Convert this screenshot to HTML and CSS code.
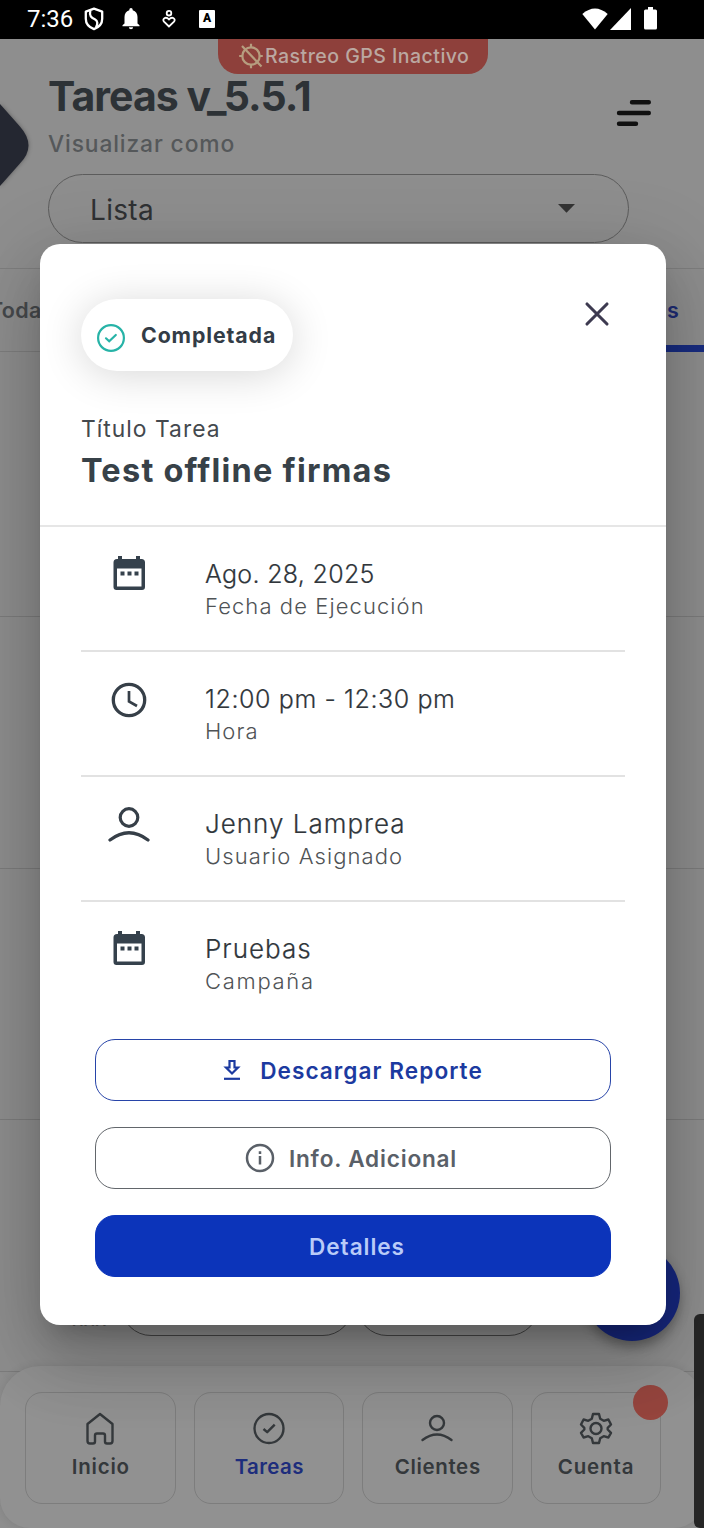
FILE: index.html
```html
<!DOCTYPE html>
<html lang="es">
<head>
<meta charset="utf-8">
<title>Tareas</title>
<link rel="stylesheet" href="styles.css">
</head>
<body>
<div class="screen">
  <div class="statusbar">
    <span class="clock">7:36</span>
    <svg class="sb-shield" width="20" height="24" viewBox="0 0 20 24" fill="none" stroke="#fff" stroke-width="2.3" stroke-linejoin="round"><path d="M10 1.6 18.2 4.6v7.2c0 4.8-3.4 8.6-8.2 10.4C5.200 20.400 1.800 16.600 1.800 11.800V4.600Z"/><path d="M6.300 3.500c-1.200 5.500 1 7 4.500 8.800 3 1.700 3.200 4.500 1.200 8"/></svg>
    <svg class="sb-bell" width="18" height="22" viewBox="0 0 18 22" fill="#fff"><path d="M9 0a1.700 1.700 0 0 1 1.700 1.700v.6c3.200.8 4.800 3.500 4.800 6.700v6.500l2 1.800v1H.5v-1l2-1.800V9c0-3.200 1.600-5.900 4.800-6.700v-.6A1.700 1.700 0 0 1 9 0Z"/><path d="M6.900 19.200h4.200a2.100 2 0 0 1-4.200 0Z"/></svg>
    <svg class="sb-care" width="14" height="18" viewBox="0 0 14 18" fill="none" stroke="#fff" stroke-width="1.800"><circle cx="7" cy="3.200" r="2.300"/><path d="M7 16.500 2 11.700C-.3 9 3.700 5.800 7 9.500 10.300 5.800 14.300 9 12 11.700Z"/></svg>
    <span class="sb-a">A</span>
    <svg class="sb-wifi" width="26" height="22" viewBox="0 0 26 22" fill="#fff"><path d="M13 21.500.3 6Q13-5 25.700 6Z"/></svg>
    <svg class="sb-signal" width="21" height="22" viewBox="0 0 21 22" fill="#fff"><path d="M21 0v22H0Z"/></svg>
    <svg class="sb-battery" width="13" height="23" viewBox="0 0 13 23" fill="#fff"><path d="M4 0h5v2.500h2.500q1.500 0 1.500 1.500v17q0 1.500-1.500 1.500h-10Q0 22.500 0 21V4q0-1.500 1.500-1.500H4Z"/></svg>
  </div>

  <div class="app">
    <header class="header">
      <div class="header-text">
        <h1 class="title">Tareas v_5.5.1</h1>
        <p class="subtitle">Visualizar como</p>
      </div>
      <svg class="menu" width="36" height="28" viewBox="0 0 36 28" stroke="#111" stroke-width="4.400" stroke-linecap="round"><path d="M16 3.200H32.800M3 14H32.800M3 24.700H20"/></svg>
      <div class="select"><span>Lista</span><svg width="17" height="9" viewBox="0 0 17 9" fill="#333"><path d="M0 0h17L8.500 8.700Z"/></svg></div>
    </header>
    <div class="tabs"><span class="tab tab-first">Todas</span><span class="tab tab-active">s</span></div>
    <div class="list">
      <div class="row"></div><div class="row"></div><div class="row"></div>
      <div class="row row-last"><span class="row-label">xxx</span><i class="pill pill-a"></i><i class="pill pill-b"></i></div>
    </div>
    <div class="gps"><svg width="24" height="26" viewBox="0 0 24 26" fill="none" stroke="#b69d7f" stroke-width="2.200"><circle cx="12" cy="13" r="8.700"/><path d="M12 .7v4M12 21.300v4M.2 13h4M19.800 13h4M3 3 22.500 23.500"/></svg><span>Rastreo GPS Inactivo</span></div>
    <svg class="drawer" width="30" height="90" viewBox="0 0 30 90"><path d="M0 3 19.500 25Q37.500 45 19.500 63L0 85Z" fill="#242731"/></svg>
    <div class="fab"></div>
    <nav class="nav">
      <div class="nav-item"><svg width="34" height="34" viewBox="0 0 34 34" class="line"><path d="M4.500 12 17 2 29.500 12V29Q29.500 31.500 27 31.500H24Q22 31.500 22 29.500V23.500Q22 21.500 20 21.500H14Q12 21.500 12 23.500V29.500Q12 31.500 10 31.500H7Q4.500 31.500 4.500 29Z"/></svg><span class="l-inicio">Inicio</span></div>
      <div class="nav-item active"><svg width="34" height="34" viewBox="0 0 34 34" class="line"><circle cx="17" cy="16.500" r="14.500"/><path d="m11.500 17 3.700 3.200 7.500-7.500"/></svg><span class="l-tareas">Tareas</span></div>
      <div class="nav-item"><svg width="34" height="34" viewBox="0 0 34 34" class="line"><circle cx="17" cy="11" r="7"/><path d="M2.500 28Q17 17 31.500 28" stroke-linecap="round"/></svg><span class="l-clientes">Clientes</span></div>
      <div class="nav-item nav-narrow"><svg width="34" height="34" viewBox="0 0 34 34" class="line"><path d="M14 2H20L21.200 6.800 24.700 8.800 29.400 7.500 32 12.500 28.700 15.800V17.500L32 20.800 29.400 25.500 24.700 24.200 21.200 26.200 20 31H14L12.800 26.200 9.300 24.200 4.600 25.500 2 20.800 5.300 17.500V15.800L2 12.500 4.600 7.500 9.300 8.800 12.800 6.800Z"/><circle cx="17" cy="16.500" r="5.500"/></svg><span class="l-cuenta">Cuenta</span><i class="dot"></i></div>
    </nav>
    <div class="edge"></div>
  </div>

  <section class="modal">
    <div class="modal-head">
      <div class="modal-top">
        <div class="chip"><svg width="28" height="28" viewBox="0 0 28 28" fill="none" stroke="#27b3a7" stroke-width="2.200" stroke-linecap="round"><circle cx="14" cy="14" r="12.900"/><path d="m9 14.300 3.200 3 6.600-6.300"/></svg><span>Completada</span></div>
        <svg class="close" width="26" height="26" viewBox="0 0 26 26" stroke="#3d3a50" stroke-width="3.100" stroke-linecap="round"><path d="M3 3 23 23M23 3 3 23"/></svg>
      </div>
      <p class="kicker">Título Tarea</p>
      <h2 class="task">Test offline firmas</h2>
    </div>
    <div class="details">
      <div class="detail">
        <svg class="ico" width="42" height="42" viewBox="0 0 42 42" fill="#35414c"><path fill-rule="evenodd" d="M10 3h4v3h14V3h4v3h1.500Q37 6 37 9.500V34q0 3-3 3H8.500q-3 0-3-3V9.500Q5.500 6 9 6h1ZM9 15.500V33.500H33.500V15.500Z"/><path d="M12.500 18.500h4v4h-4ZM19.500 18.500h4v4h-4ZM26.500 18.500h4v4h-4Z"/></svg>
        <div><p class="main m-date">Ago. 28, 2025</p><p class="sub">Fecha de Ejecución</p></div>
      </div>
      <div class="detail">
        <svg class="ico" width="42" height="42" viewBox="0 0 42 42" fill="none" stroke="#363f48" stroke-width="3.300"><circle cx="21" cy="22" r="15.700"/><path d="M21 13v10.500l8 4.500" stroke-width="2.700"/></svg>
        <div><p class="main m-time">12:00 pm - 12:30 pm</p><p class="sub">Hora</p></div>
      </div>
      <div class="detail">
        <svg class="ico" width="42" height="42" viewBox="0 0 42 42" fill="none" stroke="#363f48" stroke-width="3.200"><circle cx="21" cy="14.500" r="8.800"/><path d="M2 37Q21 22.500 40 37" stroke-linecap="round"/></svg>
        <div><p class="main">Jenny Lamprea</p><p class="sub">Usuario Asignado</p></div>
      </div>
      <div class="detail">
        <svg class="ico" width="42" height="42" viewBox="0 0 42 42" fill="#35414c"><path fill-rule="evenodd" d="M10 3h4v3h14V3h4v3h1.500Q37 6 37 9.500V34q0 3-3 3H8.500q-3 0-3-3V9.500Q5.500 6 9 6h1ZM9 15.500V33.500H33.500V15.500Z"/><path d="M12.500 18.500h4v4h-4ZM19.500 18.500h4v4h-4ZM26.500 18.500h4v4h-4Z"/></svg>
        <div><p class="main">Pruebas</p><p class="sub s-camp">Campaña</p></div>
      </div>
    </div>
    <div class="actions">
      <div class="btn btn-report"><svg width="18" height="22" viewBox="0 0 18 22" fill="none" stroke="#1c3aa0" stroke-width="2.200"><path d="M6.500 2h5v6.500H15L9 14.500 3 8.500H6.500Z"/><path d="M1 19.800H17"/></svg><span>Descargar Reporte</span></div>
      <div class="btn btn-info"><svg width="30" height="30" viewBox="0 0 30 30" fill="none" stroke="#5a6068" stroke-width="2.500"><circle cx="15" cy="15" r="13"/><path d="M15 13V21.500M15 8.300v2.800"/></svg><span>Info. Adicional</span></div>
      <div class="btn btn-main"><span>Detalles</span></div>
    </div>
  </section>
</div>
</body>
</html>
```
FILE: styles.css
```css
* { box-sizing: border-box; }
body { margin: 0; font-family: Inter, "Open Sans", sans-serif; }
h1, h2, p { margin: 0; white-space: nowrap; }
svg { display: block; flex: none; }
.screen { position: relative; width: 704px; height: 1528px; overflow: hidden; display: flex; flex-direction: column; background: #8e8e8e; }

/* status bar */
.statusbar { height: 39px; flex: none; background: #000; display: flex; align-items: center; padding: 0 0 2px 27px; color: #fff; }
.clock { font: 400 24px/36px Roboto, sans-serif; width: 57px; white-space: nowrap; }
.sb-bell { margin-left: 18px; }
.sb-care { margin-left: 22px; }
.sb-a { margin-left: 23px; width: 16px; height: 18px; background: #fff; color: #000; border-radius: 1px; font: 900 12px/16px Roboto, sans-serif; text-align: center; }
.sb-wifi { margin-left: 367px; }
.sb-signal { margin-left: 2px; }
.sb-battery { margin-left: 13px; }

/* dimmed app */
.app { position: relative; flex: 1; display: flex; flex-direction: column; overflow: hidden; }
.header { height: 230px; padding: 34px 52px 0 48px; display: flex; flex-wrap: wrap; justify-content: space-between; align-content: flex-start; border-bottom: 1px solid #7e7e7e; }
.title { font-size: 41px; line-height: 46px; font-weight: 700; letter-spacing: -.940px; color: #2d3236; }
.subtitle { margin-top: 13px; font-size: 22.800px; line-height: 24px; font-weight: 500; letter-spacing: .880px; color: #55585a; }
.menu { margin-top: 26px; }
.select { width: 581px; height: 69px; margin-top: 18px; padding: 2px 53px 0 41px; border: 1.500px solid #5c5c5c; border-radius: 35px; display: flex; align-items: center; justify-content: space-between; font-size: 28px; letter-spacing: .300px; color: #2f3133; }
.select svg { margin-top: -2px; }
.tabs { height: 83px; flex: none; display: flex; align-items: center; justify-content: space-between; border-bottom: 1px solid #7e7e7e; font-size: 21.500px; font-weight: 600; }
.tab { line-height: 83px; height: 83px; }
.tab-first { margin-left: -11px; color: #46494c; letter-spacing: .3px; }
.tab-active { width: 80px; padding-left: 43px; color: #1e2c74; border-bottom: 7px solid #182c80; }
.list { flex: 1; }
.row { height: 251.500px; border-bottom: 1px solid #7c7c7c; }
.row:first-child { height: 265px; }
.row-last { display: flex; align-items: flex-end; padding: 0 0 35px 72px; }
.row-label { width: 49px; font-size: 21px; line-height: 20px; margin-bottom: 7px; color: #555; }
.pill { height: 60px; border: 1.500px solid #454545; border-radius: 30px; }
.pill-a { width: 232px; }
.pill-b { width: 182px; margin-left: 4px; }

.gps { position: absolute; top: 0; left: 218px; width: 270px; height: 35px; border-radius: 0 0 20px 20px; background: #8e403b; display: flex; align-items: center; padding: 0 0 2px 21px; color: #bba8a1; font-size: 19.500px; font-weight: 500; letter-spacing: .480px; white-space: nowrap; }
.gps span { margin-left: 2px; }
.drawer { position: absolute; left: 0; top: 62px; filter: drop-shadow(0 0 2px rgba(0, 0, 0, .35)); }
.fab { position: absolute; left: 584px; top: 1206px; width: 96px; height: 96px; border-radius: 50%; background: #17287f; box-shadow: 0 6px 12px rgba(0, 0, 0, .3); }
.nav { position: absolute; left: 0; bottom: 0; width: 704px; height: 162px; padding: 26px 0 24px 25px; display: flex; gap: 18px; background: #919191; border-radius: 40px 40px 30px 30px; box-shadow: 0 0 8px rgba(0, 0, 0, .1); }
.nav-item { position: relative; width: 150.500px; height: 112px; padding-top: 19px; border: 1px solid #7d7d7d; border-radius: 17px; display: flex; flex-direction: column; align-items: center; color: #34383b; font-size: 20.500px; line-height: 24px; font-weight: 600; }
.nav-narrow { width: 130px; }
.nav-item span { margin: 9px 0 0 1px; }
.nav-item.active span { color: #1d2d7c; }
.line { fill: none; stroke: #34383b; stroke-width: 2.400; stroke-linejoin: round; }
.l-inicio { letter-spacing: .8px; }
.l-tareas { letter-spacing: .4px; }
.l-clientes { letter-spacing: .650px; }
.l-cuenta { letter-spacing: .850px; }
.dot { position: absolute; right: -8px; top: -8px; width: 35px; height: 35px; border-radius: 50%; background: #96453e; }
.edge { position: absolute; right: 0; bottom: 0; width: 10px; height: 214px; border-radius: 6px 0 0 6px; background: #262626; }

/* dialog */
.modal { position: absolute; left: 40px; top: 244px; width: 626px; height: 1081px; border-radius: 20px; background: #fff; color: #363e45; box-shadow: 0 18px 25px -12px rgba(0, 0, 0, .2), 0 40px 64px 5px rgba(0, 0, 0, .14), 0 15px 77px 13px rgba(0, 0, 0, .12); }
.modal-head { height: 283px; padding: 55px 56px 0 41px; border-bottom: 2px solid #e6e6e6; }
.modal-top { display: flex; justify-content: space-between; align-items: flex-start; }
.chip { width: 212px; height: 72px; border-radius: 36px; padding-left: 16px; display: flex; align-items: center; background: #fff; box-shadow: 0 4px 42px rgba(0, 0, 0, .16); font-size: 21.300px; font-weight: 700; letter-spacing: .900px; color: #333c46; }
.chip svg { margin-top: 5px; }
.chip span { margin-left: 16px; }
.close { margin-top: 2px; }
.kicker { margin-top: 44px; font-size: 22.800px; line-height: 28px; letter-spacing: 1.030px; color: #44494e; }
.task { margin-top: 8px; font-size: 32.500px; line-height: 40px; letter-spacing: 1.220px; font-weight: 700; color: #374148; }
.details { padding: 0 41px; }
.detail { height: 125px; padding: 31px 0 0 27px; display: flex; border-bottom: 2px solid #e2e2e2; }
.detail:last-child { border-bottom-color: transparent; }
.detail .ico { margin: -5px 55px 0 0; }
.main { font-size: 26px; line-height: 32px; font-weight: 300; letter-spacing: 1px; color: #30363b; -webkit-text-stroke: .2px #30363b; }
.m-date { font-size: 25px; letter-spacing: .300px; }
.m-time { font-size: 25px; letter-spacing: .600px; }
.sub { font-size: 22px; line-height: 32px; font-weight: 300; letter-spacing: 1.080px; color: #4f5356; }
.s-camp { letter-spacing: 1.700px; }
.actions { padding: 12px 55px 0; display: flex; flex-direction: column; gap: 26px; }
.btn { height: 62px; border: 1.500px solid; border-radius: 20px; display: flex; align-items: center; justify-content: center; font-size: 22.600px; font-weight: 600; white-space: nowrap; }
.btn-report { color: #1c3aa0; border-color: #2744a8; letter-spacing: 1.050px; gap: 19px; }
.btn-info { color: #5a6068; border-color: #62666b; letter-spacing: .800px; gap: 14px; padding-right: 4px; }
.btn-main { background: #0c34ba; border-color: #0c34ba; color: #b9cbf8; letter-spacing: .950px; padding-left: 8px; }
```
